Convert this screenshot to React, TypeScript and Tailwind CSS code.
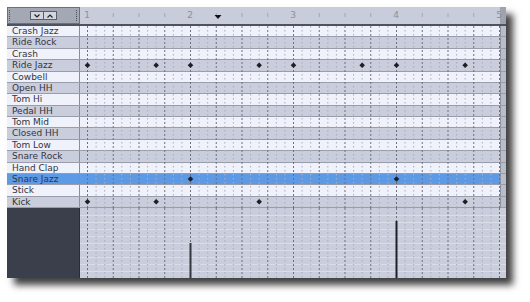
import React from "react";

const instruments = [
  "Crash Jazz", "Ride Rock", "Crash", "Ride Jazz", "Cowbell", "Open HH",
  "Tom Hi", "Pedal HH", "Tom Mid", "Closed HH", "Tom Low", "Snare Rock",
  "Hand Clap", "Snare Jazz", "Stick", "Kick",
];

// notes: row index -> grid steps (12 steps per beat)
const notes: Record<number, number[]> = {
  3: [0, 8, 12, 20, 24, 32, 36, 44],
  13: [12, 36],
  15: [0, 8, 20, 44],
};

const SELECTED = 13;
const ROW_H = 182 / 16;
const stepX = (k: number) => 7 + (k * 103) / 12;
const steps = Array.from({ length: 49 }, (_, k) => k);

const GridLines = ({ h }: { h: number }) => (
  <>
    {steps.map((k) => {
      const strong = k % 3 === 0;
      return (
        <line
          key={k}
          x1={stepX(k) + 0.5}
          x2={stepX(k) + 0.5}
          y1={0}
          y2={h}
          stroke={strong ? "#6c707c" : "#a9adbd"}
          strokeWidth={1}
          strokeDasharray={strong ? "2 2" : "1.5 2.5"}
        />
      );
    })}
  </>
);

const App = () => {
  return (
    <div className="w-[530px] h-[302px] bg-white pt-[7px] pl-[7px] font-['DejaVu_Sans',sans-serif]">
      <div className="w-[499px] h-[271px] flex flex-col bg-[#c9cddb] shadow-[7px_7px_7px_rgba(0,0,0,0.75)]">
        {/* header */}
        <div className="flex h-[19px] border-b-2 border-[#4f535e]">
          <div className="w-[73px] h-full bg-[#a4a8b4] border border-[#6c707a] flex items-center justify-between px-[1px]">
            <div className="w-[2px] h-[11px] border-l border-dotted border-[#4a4e58]" />
            <div className="flex gap-[1px] p-[1px] bg-[#5a5e68]">
              <div className="w-[12px] h-[7px] bg-[#d4d6de] flex items-center justify-center">
                <svg width="6" height="4" viewBox="0 0 6 4"><path d="M0.5 0.5 L3 3 L5.5 0.5" fill="none" stroke="#222" strokeWidth="1.2" /></svg>
              </div>
              <div className="w-[12px] h-[7px] bg-[#d4d6de] flex items-center justify-center">
                <svg width="6" height="4" viewBox="0 0 6 4"><path d="M0.5 3.5 L3 1 L5.5 3.5" fill="none" stroke="#222" strokeWidth="1.2" /></svg>
              </div>
            </div>
            <div className="w-[2px] h-[11px] border-l border-dotted border-[#4a4e58]" />
          </div>
          <div className="relative flex-1 bg-[#c8ccdb]">
            <div className="absolute right-0 top-0 w-[6px] h-full bg-[#9fa3af]" />
            <svg className="absolute left-0 top-0" width="426" height="17">
              {[0, 1, 2, 3].flatMap((b) =>
                [1, 2, 3].map((q) => {
                  const x = stepX(b * 12 + q * 3) + 0.5;
                  return <line key={`${b}-${q}`} x1={x} x2={x} y1={6} y2={10} stroke="#a3a7b5" strokeWidth={1} />;
                })
              )}
              <path d="M134.5 8 L141.5 8 L138 12 Z" fill="#111" />
            </svg>
            {[1, 2, 3, 4, 5].map((n, i) => (
              <span
                key={n}
                className="absolute top-[3px] w-[10px] text-center text-[9px] leading-[10px] text-[#8c909c]"
                style={{ left: stepX(i * 12) - 5 }}
              >
                {n}
              </span>
            ))}
          </div>
        </div>

        {/* instrument rows */}
        <div className="relative h-[182px] grid grid-rows-16">
          {instruments.map((name, i) => {
            const bg = i === SELECTED ? "bg-[#5c9ae6]" : i % 2 === 0 ? "bg-[#eff1fb]" : "bg-[#c9cddc]";
            return (
              <div key={name} className={`flex border-b border-[#999dab] ${bg}`}>
                <div className="w-[73px] border-r border-[#8a8e9a] pl-[5px] text-[9px] leading-[10px] text-[#333640] whitespace-nowrap">
                  {name}
                </div>
                <div className="flex-1" />
                <div className="w-[6px] bg-[#b9bdca] border-l border-[#8e92a0]" />
              </div>
            );
          })}
          <svg className="absolute left-[73px] top-0" width="420" height="182">
            <GridLines h={182} />
            {Object.entries(notes).flatMap(([row, ks]) =>
              ks.map((k) => {
                const cx = stepX(k) + 0.5;
                const cy = Number(row) * ROW_H + ROW_H / 2 - 0.5;
                return (
                  <path
                    key={`${row}-${k}`}
                    d={`M${cx} ${cy - 2.8} L${cx + 2.8} ${cy} L${cx} ${cy + 2.8} L${cx - 2.8} ${cy} Z`}
                    fill="#1e1f24"
                  />
                );
              })
            )}
          </svg>
        </div>

        {/* velocity editor */}
        <div className="flex h-[70px]">
          <div className="w-[73px] bg-[#3b3f4b] border-r border-[#2a2d35]" />
          <div className="relative flex-1 bg-[#c9cddc]">
            <svg className="absolute left-0 top-0" width="426" height="70">
              {Array.from({ length: 9 }, (_, i) => (
                <line key={i} x1={0} x2={426} y1={7 * (i + 1) + 0.5} y2={7 * (i + 1) + 0.5} stroke="#dadde8" strokeWidth={1} />
              ))}
              <GridLines h={70} />
              <rect x={stepX(12) - 0.5} y={35} width={2} height={35} fill="#35363d" />
              <rect x={stepX(36) - 0.5} y={13} width={2} height={57} fill="#202126" />
            </svg>
          </div>
        </div>
      </div>
    </div>
  );
};

export default App;
